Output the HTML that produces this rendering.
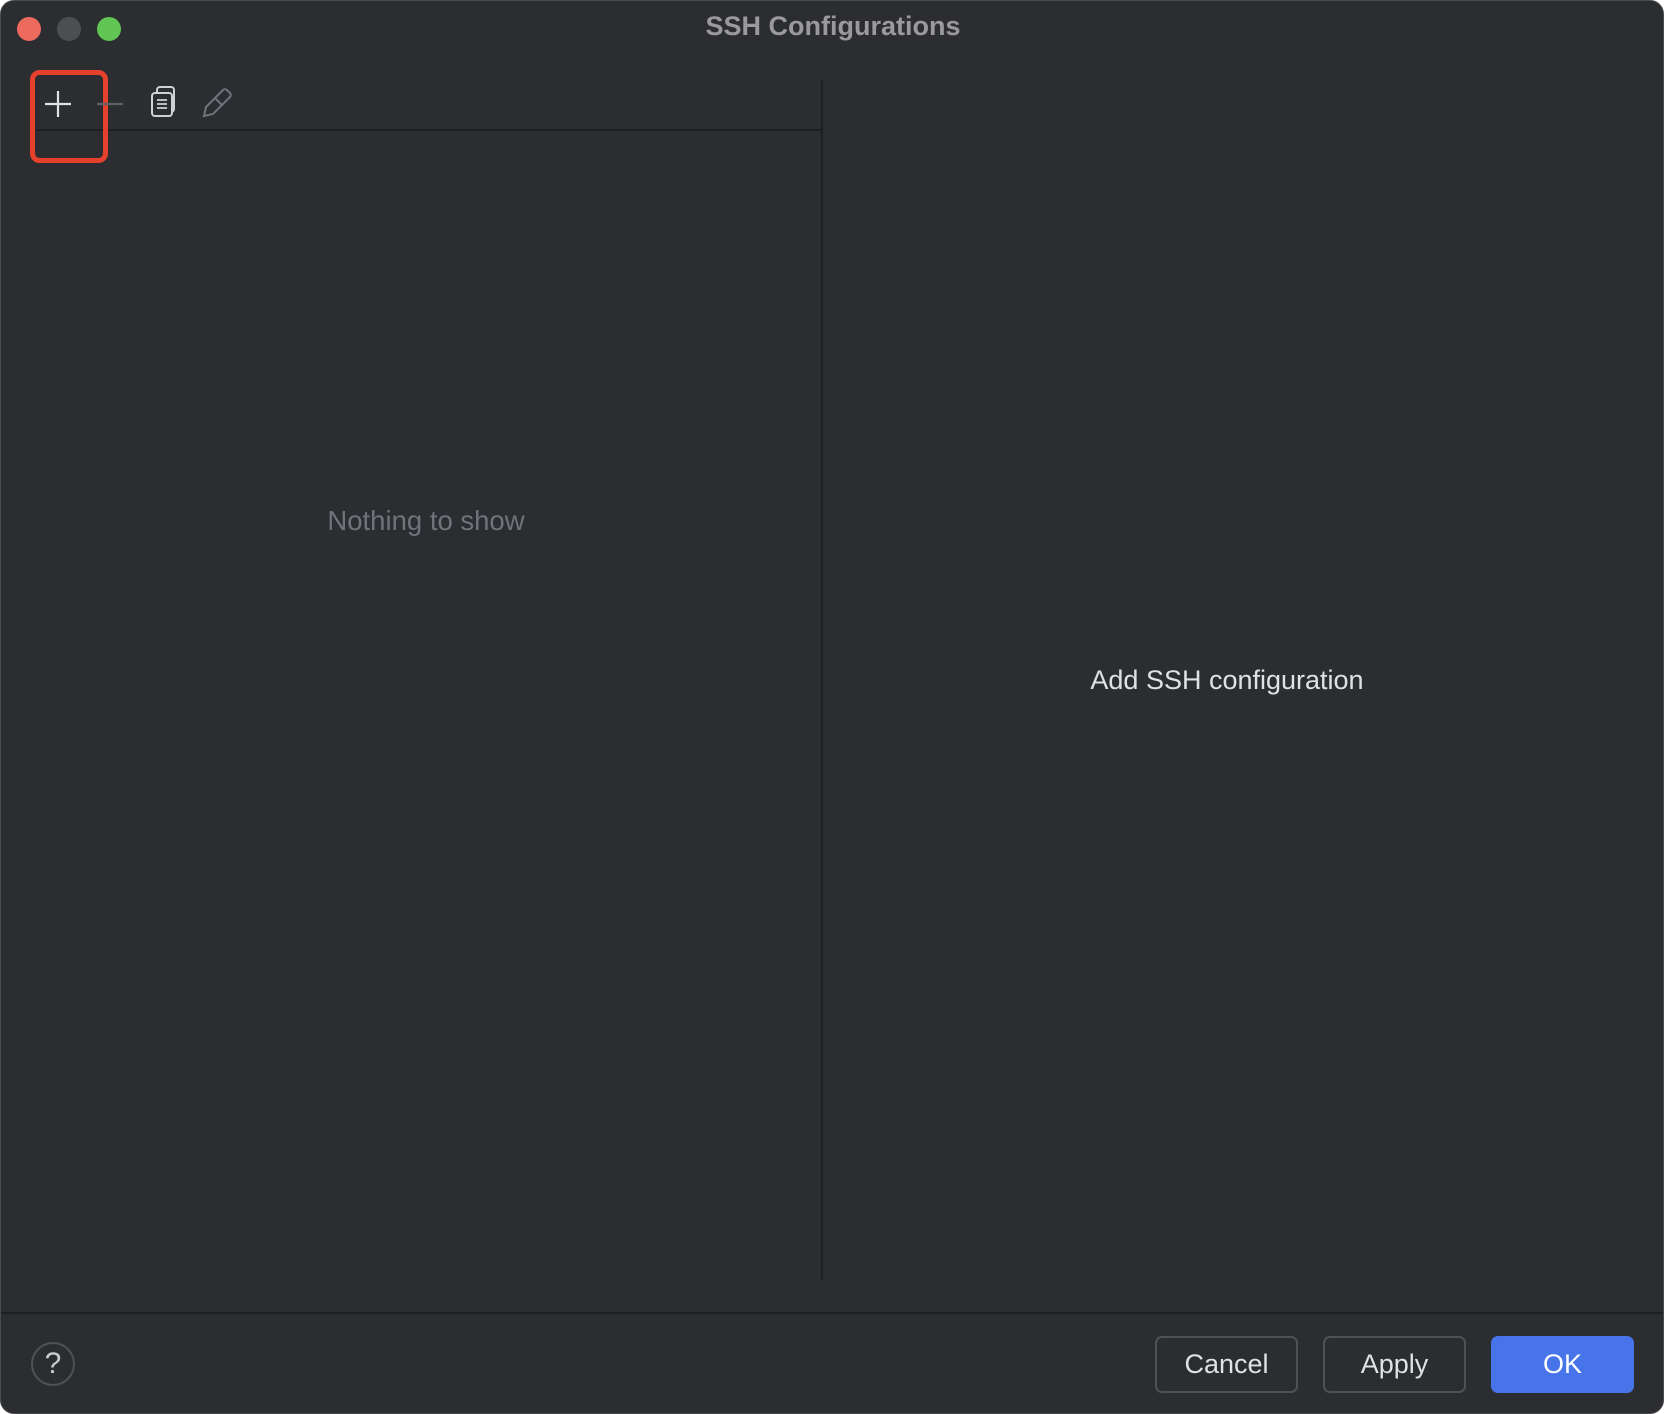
<!DOCTYPE html>
<html><head><meta charset="utf-8"><style>
*{margin:0;padding:0;box-sizing:border-box}
body{width:1664px;height:1414px;background:#fff;overflow:hidden;font-family:"Liberation Sans",sans-serif}
.win{position:absolute;left:0;top:0;width:1664px;height:1414px;background:#2b2d30;border-radius:14px;border:1px solid #4a4b4e;overflow:hidden}
.abs{position:absolute}
.dot{position:absolute;width:24px;height:24px;border-radius:50%;top:16px}
.btn{position:absolute;top:1335px;height:57px;width:143px;border:2px solid #4e5157;border-radius:7px;color:#dfe1e5;font-size:27px;text-align:center;line-height:53px}
</style></head><body>
<div class="win">
<div class="dot" style="left:16px;background:#ec6a5e"></div>
<div class="dot" style="left:56px;background:#4d4e51"></div>
<div class="dot" style="left:96px;background:#61c554"></div>
<div class="abs" style="left:0;width:1664px;top:10px;text-align:center;font-size:27px;font-weight:bold;color:#9a9a9c;">SSH Configurations</div>

<div class="abs" style="left:35px;top:128px;width:786px;height:2px;background:#1e1f22"></div>
<div class="abs" style="left:820px;top:80px;width:2px;height:1198px;background:#1e1f22"></div>
<div class="abs" style="left:0;top:1311px;width:1664px;height:2px;background:#1e1f22"></div>

<svg class="abs" style="left:0;top:60px" width="260" height="110">
<rect x="31.5" y="11.5" width="73" height="88" rx="7" fill="none" stroke="#e5412d" stroke-width="5"/>
<path d="M44 43H70M57 30V56" stroke="#dfe1e5" stroke-width="2.2"/>
<path d="M96 43H122" stroke="#5d6066" stroke-width="2.2"/>
<rect x="151" y="32" width="20" height="23" rx="3" fill="none" stroke="#cfd1d5" stroke-width="2"/>
<path d="M156 31V29a3 3 0 0 1 3-3h11a3 3 0 0 1 3 3v19a3 3 0 0 1-3 3" fill="none" stroke="#cfd1d5" stroke-width="2"/>
<path d="M156 39h10M156 43h10M156 47h10" stroke="#cfd1d5" stroke-width="1.8"/>
<path d="M203 55l2-9 17-17a3 3 0 0 1 4 0l3 3a3 3 0 0 1 0 4l-17 17zM214 37l7 7" fill="none" stroke="#6f737a" stroke-width="2"/>
</svg>

<div class="abs" style="left:0;width:850px;top:504px;text-align:center;font-size:27.5px;color:#6f737a">Nothing to show</div>
<div class="abs" style="left:822px;width:808px;top:664px;text-align:center;font-size:27px;color:#dfe1e5">Add SSH configuration</div>

<div class="abs" style="left:30px;top:1341px;width:44px;height:44px;border:2px solid #4e5157;border-radius:50%;color:#c9cbd0;font-size:30px;text-align:center;line-height:40px">?</div>
<div class="btn" style="left:1154px">Cancel</div>
<div class="btn" style="left:1322px">Apply</div>
<div class="btn" style="left:1490px;background:#4774e8;border-color:#4774e8;color:#fff">OK</div>
</div>
</body></html>
